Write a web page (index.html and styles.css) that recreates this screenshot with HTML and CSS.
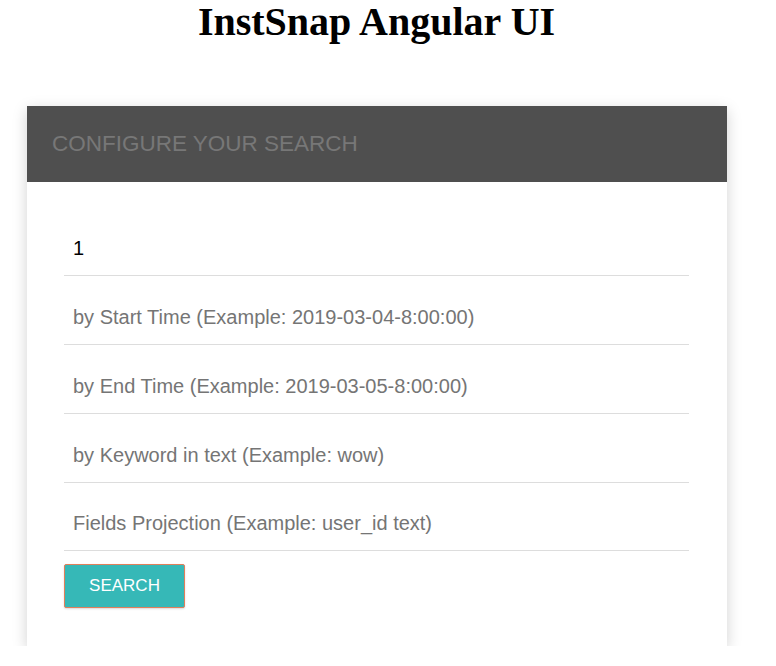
FILE: index.html
```html
<!DOCTYPE html>
<html>
<head>
<meta charset="utf-8">
<link rel="stylesheet" href="styles.css">
</head>
<body>
<h1 class="title">InstSnap Angular UI</h1>
<div class="card">
  <div class="card-header">CONFIGURE YOUR SEARCH</div>
  <div class="card-body">
    <input class="field" type="text" value="1">
    <input class="field" type="text" placeholder="by Start Time (Example: 2019-03-04-8:00:00)">
    <input class="field" type="text" placeholder="by End Time (Example: 2019-03-05-8:00:00)">
    <input class="field" type="text" placeholder="by Keyword in text (Example: wow)">
    <input class="field" type="text" placeholder="Fields Projection (Example: user_id text)">
    <button class="btn">SEARCH</button>
  </div>
</div>
</body>
</html>
```
FILE: styles.css
```css
html, body { margin: 0; padding: 0; background: #fff; }
body { font-family: "Liberation Sans", Arial, sans-serif; }
.title {
  font-family: "Liberation Serif", "Times New Roman", serif;
  font-weight: bold;
  font-size: 40px;
  line-height: 44px;
  text-align: center;
  margin: 0;
  padding-right: 23px;
}
.card {
  margin: 62px 0 0 27px;
  width: 700px;
  background: #fff;
  box-shadow: 0 4px 14px rgba(0,0,0,0.18);
}
.card-header {
  background: #4f4f4f;
  color: #777;
  height: 76px;
  box-sizing: border-box;
  padding: 25px 25px 0;
  font-size: 22.5px;
  line-height: 26px;
}
.card-body {
  padding: 25px 38px 38px 37px;
  display: flex;
  flex-direction: column;
  align-items: flex-start;
}
.field {
  width: 625px;
  height: 69px;
  box-sizing: border-box;
  border: none;
  border-bottom: 1px solid #ddd;
  padding: 14px 9px 0;
  font-family: "Liberation Sans", Arial, sans-serif;
  font-size: 20px;
  color: #000;
  outline: none;
  background: transparent;
}
.field:last-of-type { height: 68px; }
.field::placeholder { color: #757575; }
.btn {
  margin-top: 13px;
  width: 121px;
  height: 44px;
  background: #36b8b7;
  color: #fff;
  border: 1px solid #e07f5b;
  border-radius: 2px;
  font-family: "Liberation Sans", Arial, sans-serif;
  font-size: 17px;
  box-shadow: 0 1px 2px rgba(0,0,0,0.15);
}
```
